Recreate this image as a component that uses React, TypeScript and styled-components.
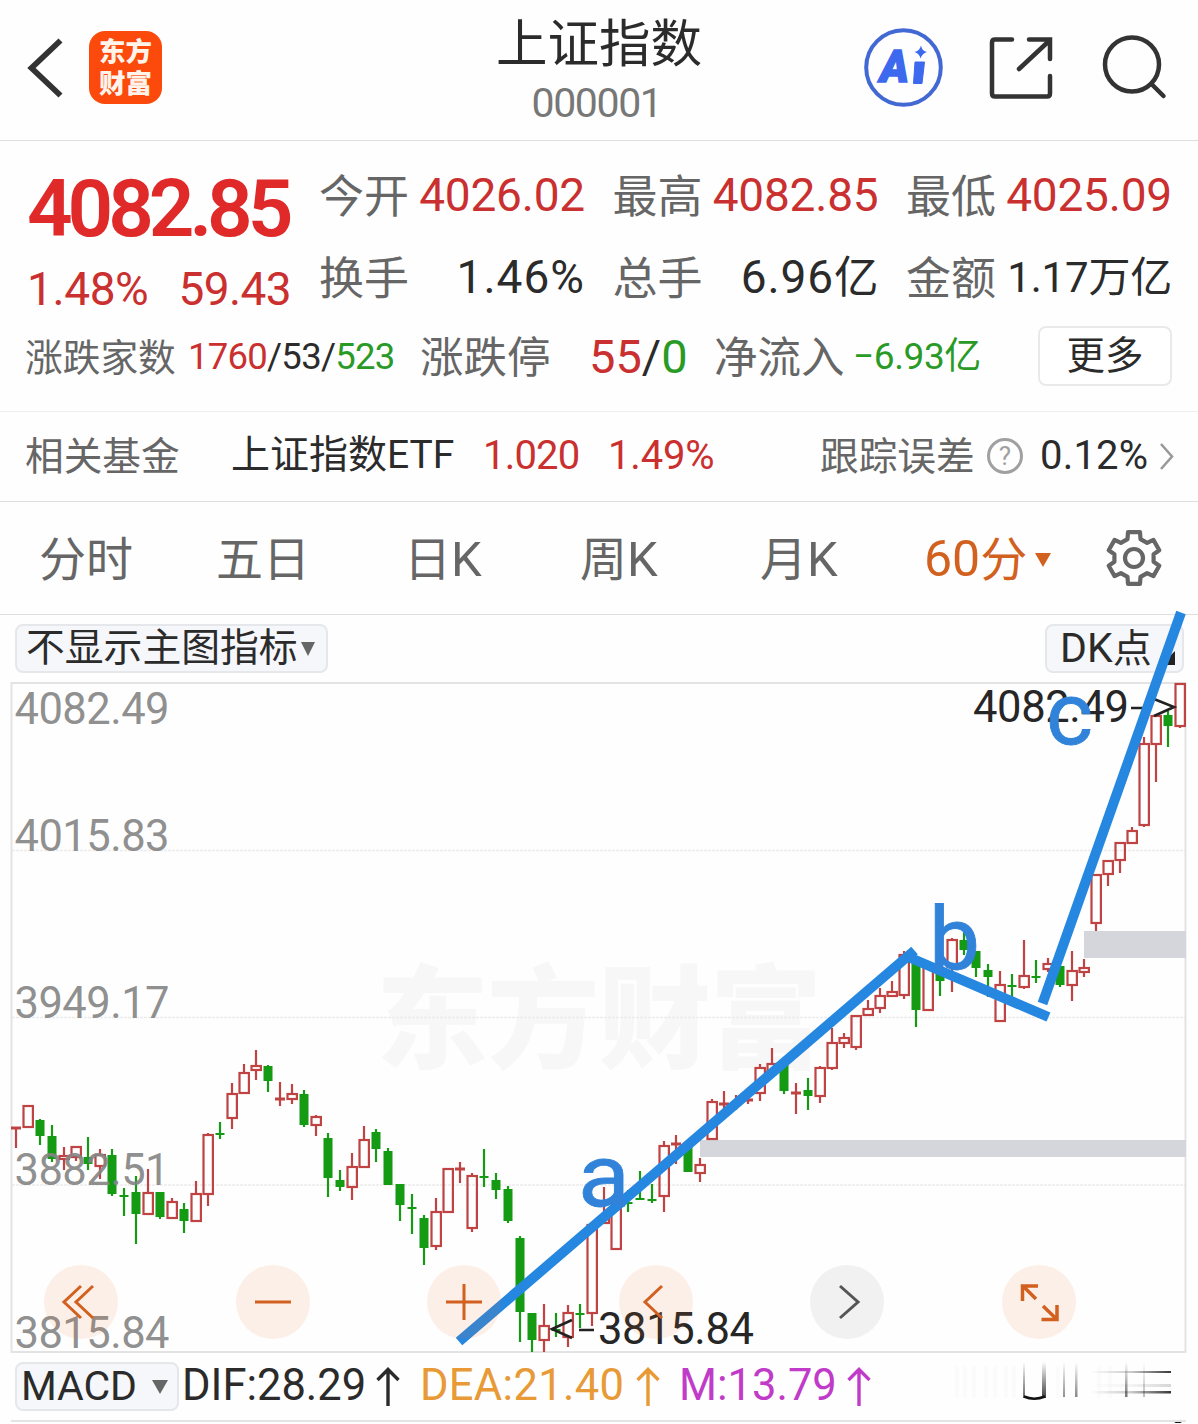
import React from 'react';
import styled, { createGlobalStyle } from 'styled-components';

const C = {
  red: '#c9302f',
  green: '#2a9a27',
  dark: '#2b2b2b',
  gray: '#666666',
  orange: '#d2601f',
  line: '#dedede',
  blue: '#2587df',
};

const GlobalStyle = createGlobalStyle`
  * { box-sizing: border-box; }
  body { margin: 0; background: #fefefe; }
  svg { display: block; flex: none; }
`;

const Screen = styled.div`
  width: 1198px;
  height: 1424px;
  overflow: hidden;
  background: #fefefe;
  color: ${C.dark};
  font-family: Roboto, 'Noto Sans CJK SC', sans-serif;
  display: flex;
  flex-direction: column;
`;

const Txt = styled.span<{ $s: number; $c?: string; $ls?: number; $w?: number }>`
  display: block;
  white-space: nowrap;
  font-size: ${p => p.$s}px;
  line-height: 1.2;
  color: ${p => p.$c ?? C.dark};
  letter-spacing: ${p => p.$ls ?? 0}px;
  font-weight: ${p => p.$w ?? 400};
`;

const Label = styled(Txt)`
  padding-top: 4px;
  margin-left: -1px;
`;

const Part = styled.span<{ $c?: string; $s?: number; $ls?: number }>`
  color: ${p => p.$c ?? 'inherit'};
  font-size: ${p => (p.$s ? `${p.$s}px` : 'inherit')};
  letter-spacing: ${p => (p.$ls !== undefined ? `${p.$ls}px` : 'inherit')};
`;

/* ---------- header ---------- */
const Header = styled.header`
  height: 141px;
  flex: none;
  border-bottom: 1px solid ${C.line};
  display: grid;
  grid-template-columns: 400px 1fr 400px;
`;

const HeaderLeft = styled.div`
  display: flex;
  align-items: flex-start;
  padding: 31px 0 0 26px;
  gap: 25px;
`;

const Logo = styled.div`
  width: 73px;
  height: 73px;
  border-radius: 16px;
  background: #fb4a0b;
  color: #fff3ea;
  font-weight: 900;
  font-size: 26.5px;
  line-height: 32px;
  padding-top: 5px;
  text-align: center;
`;

const TitleBox = styled.div`
  display: flex;
  flex-direction: column;
  align-items: center;
  padding-top: 14px;
`;

const Code = styled(Txt)`
  margin-top: 3px;
  padding-right: 5px;
`;

const HeaderRight = styled.div`
  display: flex;
  align-items: flex-start;
  padding: 28px 0 0 66px;
`;

/* ---------- quote ---------- */
const Quote = styled.section`
  height: 271px;
  flex: none;
  border-bottom: 1px solid #efefef;
`;

const QuoteTop = styled.div`
  height: 177px;
  display: grid;
  grid-template-columns: 264px 1fr;
  column-gap: 29px;
  padding: 0 27px;
`;

const PriceCol = styled.div`
  display: flex;
  flex-direction: column;
  padding-top: 20px;
`;

const ChangeRow = styled.div`
  display: flex;
  justify-content: space-between;
  margin-top: 5px;
`;

const Stats = styled.div`
  display: grid;
  grid-template-columns: repeat(3, 265px);
  column-gap: 28.5px;
  grid-auto-rows: 82px;
  padding-top: 14px;
`;

const Stat = styled.div`
  display: flex;
  justify-content: space-between;
  align-items: center;
`;

const Breadth = styled.div`
  display: grid;
  grid-template-columns: 162px 233px 168px 126px 138px 185px 134px;
  align-items: center;
  height: 78px;
  padding-left: 26px;
`;

const MoreButton = styled.button`
  height: 60px;
  margin: -2px 0 0;
  padding: 0;
  border: 2px solid #e9e9e9;
  border-radius: 8px;
  background: #fff;
  font-family: inherit;
  display: flex;
  justify-content: center;
  align-items: center;
`;

/* ---------- fund ---------- */
const FundRow = styled.section`
  height: 90px;
  flex: none;
  border-bottom: 1px solid ${C.line};
  display: grid;
  grid-template-columns: 205px 252px 125px 213px 166px 53px 120px 20px;
  align-items: center;
  padding-left: 26px;
  padding-bottom: 2px;
`;

const Help = styled.span`
  width: 36px;
  height: 36px;
  border: 3px solid #a0a0a0;
  border-radius: 50%;
  color: #a0a0a0;
  font-size: 26px;
  line-height: 31px;
  text-align: center;
`;

/* ---------- tabs ---------- */
const Tabs = styled.nav`
  height: 113px;
  flex: none;
  border-bottom: 1px solid ${C.line};
  display: grid;
  grid-template-columns: 177px 188px 176px 180px 164px 181px 60px;
  align-items: center;
  padding-left: 39px;
`;

const Tab = styled.div<{ $active?: boolean }>`
  display: flex;
  align-items: center;
  gap: 8px;
  padding-top: 3px;
  font-size: 47px;
  line-height: 56px;
  color: ${p => (p.$active ? C.orange : C.gray)};
`;

const Caret = styled.i<{ $w: number; $h: number; $c: string }>`
  width: 0;
  height: 0;
  border-left: ${p => p.$w / 2}px solid transparent;
  border-right: ${p => p.$w / 2}px solid transparent;
  border-top: ${p => p.$h}px solid ${p => p.$c};
`;

/* ---------- chart ---------- */
const ChartPanel = styled.section`
  position: relative;
  height: 739px;
  flex: none;
`;

const ChartBar = styled.div`
  height: 67px;
  display: flex;
  justify-content: space-between;
  align-items: center;
  padding: 0 14px 0 15px;
`;

const Pill = styled.button<{ $w: number; $gap: number; $pl: number }>`
  width: ${p => p.$w}px;
  height: 49px;
  flex: none;
  margin: 0;
  padding: 0 0 0 ${p => p.$pl}px;
  border: 2px solid #e5e7eb;
  border-radius: 8px;
  background: #f6f7fa;
  font-family: inherit;
  display: flex;
  align-items: center;
  gap: ${p => p.$gap}px;
`;

const Corner = styled.i`
  align-self: flex-end;
  margin-bottom: 6px;
  border-left: 14px solid transparent;
  border-bottom: 14px solid #222;
`;

const ChartSvg = styled.svg`
  position: relative;
  overflow: visible;
`;

const Controls = styled.div`
  position: absolute;
  left: 44px;
  top: 650px;
  width: 1032px;
  display: flex;
  justify-content: space-between;
`;

const Round = styled.button<{ $muted?: boolean }>`
  width: 74px;
  height: 74px;
  border: 0;
  padding: 0;
  border-radius: 50%;
  background: ${p => (p.$muted ? 'rgba(60,60,60,.065)' : 'rgba(240,110,40,.1)')};
  color: ${p => (p.$muted ? '#555' : C.orange)};
`;

/* ---------- indicator ---------- */
const Foot = styled.footer`
  position: relative;
  height: 70px;
  flex: none;
`;

const Indicator = styled.div`
  display: flex;
  align-items: flex-start;
  padding: 8px 0 0 15px;
`;

const Reading = styled.div<{ $c: string; $w: number; $ml: number }>`
  width: ${p => p.$w}px;
  height: 49px;
  flex: none;
  display: flex;
  align-items: center;
  justify-content: space-between;
  margin-left: ${p => p.$ml}px;
  color: ${p => p.$c};
`;

const SmearBox = styled.div`
  width: 260px;
  flex: none;
  margin-left: auto;
  margin-top: -1px;
`;

const IndicatorBase = styled.div`
  position: absolute;
  left: 11px;
  right: 12px;
  bottom: 2px;
  height: 2px;
  background: #e4e4e4;
`;

type Candle = [number, 'r' | 'g', number, number, number, number];

// x, direction, high, body top, body bottom, low
const candles: Candle[] = [
  [16, 'r', 1127, 1127, 1129, 1148], [28, 'r', 1106, 1106, 1127, 1127], [40, 'g', 1119, 1120, 1136, 1145],
  [52, 'g', 1125, 1136, 1159, 1162], [64, 'r', 1147, 1156, 1159, 1170], [76, 'r', 1147, 1147, 1157, 1161],
  [88, 'g', 1137, 1157, 1164, 1170], [100, 'r', 1149, 1155, 1166, 1179], [112, 'g', 1149, 1155, 1194, 1196],
  [124, 'g', 1188, 1195, 1197, 1216], [136, 'g', 1176, 1192, 1214, 1244], [148, 'r', 1169, 1193, 1214, 1215],
  [160, 'g', 1192, 1192, 1217, 1219], [172, 'r', 1198, 1202, 1218, 1218], [184, 'g', 1203, 1209, 1221, 1233],
  [196, 'r', 1181, 1194, 1221, 1222], [208, 'r', 1133, 1135, 1194, 1206], [220, 'g', 1122, 1133, 1135, 1139],
  [232, 'r', 1083, 1094, 1118, 1129], [244, 'r', 1064, 1073, 1093, 1093], [256, 'r', 1050, 1066, 1070, 1080],
  [268, 'g', 1065, 1066, 1081, 1092], [280, 'r', 1082, 1098, 1100, 1106], [292, 'r', 1084, 1094, 1099, 1104],
  [304, 'g', 1090, 1094, 1125, 1127], [316, 'r', 1115, 1117, 1125, 1136], [328, 'g', 1133, 1138, 1178, 1197],
  [340, 'g', 1170, 1180, 1187, 1191], [352, 'r', 1153, 1167, 1187, 1200], [364, 'r', 1126, 1140, 1167, 1167],
  [376, 'g', 1129, 1132, 1149, 1162], [388, 'g', 1148, 1151, 1185, 1185], [400, 'g', 1184, 1184, 1205, 1221],
  [412, 'g', 1194, 1207, 1209, 1234], [424, 'g', 1215, 1218, 1248, 1265], [436, 'r', 1198, 1212, 1246, 1250],
  [448, 'r', 1169, 1169, 1212, 1212], [460, 'r', 1162, 1168, 1170, 1183], [472, 'r', 1173, 1176, 1228, 1232],
  [484, 'g', 1149, 1176, 1178, 1187], [496, 'g', 1173, 1180, 1190, 1199], [508, 'g', 1186, 1189, 1221, 1223],
  [520, 'g', 1236, 1238, 1312, 1342], [532, 'g', 1313, 1313, 1340, 1352], [544, 'r', 1304, 1326, 1340, 1352],
  [556, 'g', 1313, 1329, 1331, 1337], [568, 'r', 1305, 1313, 1337, 1347], [580, 'g', 1304, 1313, 1315, 1328],
  [592, 'r', 1223, 1225, 1313, 1326], [604, 'r', 1187, 1217, 1223, 1223], [616, 'r', 1203, 1203, 1249, 1250],
  [628, 'g', 1190, 1202, 1204, 1212], [640, 'g', 1171, 1198, 1200, 1200], [652, 'g', 1184, 1199, 1201, 1203],
  [664, 'r', 1141, 1146, 1196, 1212], [676, 'r', 1135, 1143, 1145, 1164], [688, 'g', 1147, 1147, 1172, 1172],
  [700, 'r', 1158, 1165, 1173, 1182], [712, 'r', 1099, 1102, 1139, 1140], [724, 'r', 1091, 1103, 1104, 1113],
  [736, 'r', 1095, 1102, 1104, 1110], [748, 'r', 1095, 1099, 1101, 1104], [760, 'r', 1064, 1068, 1093, 1101],
  [772, 'r', 1048, 1064, 1072, 1072], [784, 'g', 1062, 1062, 1091, 1094], [796, 'r', 1083, 1092, 1092, 1114],
  [808, 'g', 1078, 1090, 1096, 1110], [820, 'r', 1066, 1068, 1096, 1103], [832, 'r', 1028, 1043, 1068, 1070],
  [844, 'r', 1033, 1038, 1043, 1048], [856, 'r', 1016, 1016, 1047, 1050], [868, 'r', 1000, 1009, 1015, 1015],
  [880, 'r', 988, 996, 1008, 1013], [892, 'r', 981, 992, 996, 996], [904, 'r', 951, 955, 995, 999],
  [916, 'g', 957, 957, 1010, 1027], [928, 'r', 965, 965, 1010, 1010], [940, 'g', 973, 973, 981, 996],
  [952, 'r', 938, 940, 967, 992], [964, 'g', 932, 940, 950, 955], [976, 'g', 951, 951, 968, 977],
  [988, 'g', 964, 970, 977, 997], [1000, 'r', 971, 985, 1021, 1021], [1012, 'g', 974, 985, 987, 997],
  [1024, 'r', 940, 976, 987, 989], [1036, 'g', 960, 976, 977, 983], [1048, 'r', 958, 964, 969, 972],
  [1060, 'g', 966, 966, 985, 987], [1072, 'r', 951, 971, 985, 1001], [1084, 'r', 959, 968, 972, 977],
  [1096, 'r', 875, 875, 923, 931], [1108, 'r', 861, 861, 874, 886], [1120, 'r', 843, 843, 860, 873],
  [1132, 'r', 827, 831, 843, 843], [1144, 'r', 737, 744, 825, 827], [1156, 'r', 716, 716, 744, 782],
  [1168, 'g', 711, 715, 726, 747], [1180, 'r', 684, 684, 726, 728],
];

const axis: [string, number][] = [
  ['4082.49', 724], ['4015.83', 851], ['3949.17', 1018], ['3882.51', 1185], ['3815.84', 1348],
];

function CandleMark({ c }: { c: Candle }) {
  const [x, kind, hi, top, bot, lo] = c;
  const col = kind === 'r' ? '#bf4343' : '#159a14';
  const flat = bot - top <= 2;
  return (
    <g stroke={col} strokeWidth={2.2} fill="none">
      {hi < top && <path d={`M${x} ${hi}V${top}`} />}
      {lo > bot && <path d={`M${x} ${bot}V${lo}`} />}
      {kind === 'g' || flat ? (
        <rect x={x - 4.5} y={top} width={9} height={Math.max(bot - top, 2)} fill={col} stroke={flat && kind === 'r' ? col : 'none'} strokeWidth={1} />
      ) : (
        <rect x={x - 4.5} y={top} width={9.4} height={bot - top} />
      )}
    </g>
  );
}

function Chart() {
  return (
    <ChartSvg width="1198" height="672" viewBox="0 682 1198 672" fontFamily="Roboto, 'Noto Sans CJK SC', sans-serif">
      <text x="376" y="1060" fontSize="112" fontWeight="900" fill="#f7f7f7" textLength="446">东方财富</text>
      <g stroke="#ececec" strokeWidth="1.5">
        <path d="M12 850.5H1185M12 1017.5H1185M12 1185H1185" strokeDasharray="3 1" />
      </g>
      <rect x="11.5" y="683" width="1174" height="669" fill="none" stroke="#e3e3e3" strokeWidth="2" />
      <rect x="1084" y="931" width="102" height="27" fill="#d5d6db" />
      <rect x="700" y="1140" width="486" height="17" fill="#d5d6db" />
      {candles.map(c => <CandleMark key={c[0]} c={c} />)}
      <g fontSize="43.5" fill="#858585" fillOpacity="0.93">
        {axis.map(([t, y]) => <text key={t} x="14.5" y={y} textLength="155">{t}</text>)}
      </g>
      <g fontSize="43.5" fill="#262626">
        <text x="973" y="722" textLength="156">4082.49</text>
        <text x="598" y="1344" textLength="156">3815.84</text>
      </g>
      <g stroke="#222" strokeWidth="2.6" fill="none">
        <path d="M1131 708H1143M1154 699L1174 707L1154 716" />
        <path d="M579 1330H594M572 1320L552 1329L572 1338" />
      </g>
      <g stroke={C.blue} strokeWidth="10" fill="none">
        <path d="M459 1341.5L914.5 950.5" />
        <path d="M906 956L1048.5 1017" />
        <path d="M1042.500 1003.500L1181 612.500" />
      </g>
      <g fill="#3183da" stroke="#3183da" strokeWidth="0.8" fontSize="87">
        <text x="578" y="1205.500" textLength="52" lengthAdjust="spacingAndGlyphs">a</text>
        <text x="929" y="969" textLength="51" lengthAdjust="spacingAndGlyphs">b</text>
        <text x="1046" y="744" textLength="47" lengthAdjust="spacingAndGlyphs">c</text>
      </g>
    </ChartSvg>
  );
}

const controlPaths = [
  'M37 21L20 37L37 53M49 21L32 37L49 53',
  'M19 37H55',
  'M19 37H55M37 19V55',
  'M43 21L26 37L43 53',
  'M30 21L48 37L30 53',
];

function Arrow() {
  return (
    <svg width="24" height="40" viewBox="0 0 24 40" fill="none" stroke="currentColor" strokeWidth="3.4">
      <path d="M12 39V3M1.500 13L12 2.500L22.500 13" />
    </svg>
  );
}

const gear = (() => {
  const pts: string[] = [];
  for (let i = 0; i < 6; i++) {
    const base = -90 + i * 60;
    const add = (a: number, r: number) => {
      const t = ((base + a) * Math.PI) / 180;
      pts.push(`${(29 + r * Math.cos(t)).toFixed(1)} ${(29 + r * Math.sin(t)).toFixed(1)}`);
    };
    add(-19, 20);
    add(-13, 26.5);
    add(13, 26.5);
    add(19, 20);
  }
  return `M${pts.join('L')}Z`;
})();

const faint = [955, 963, 972, 984, 993, 1004, 1012, 1056, 1097, 1108];

function Smear() {
  return (
    <svg width="260" height="62" viewBox="938 1361 260 62" fill="none">
      <defs>
        <linearGradient id="fv" x1="0" y1="1362" x2="0" y2="1398" gradientUnits="userSpaceOnUse">
          <stop offset="0" stopColor="#000" stopOpacity="0" />
          <stop offset="1" stopColor="#000" stopOpacity=".75" />
        </linearGradient>
        <linearGradient id="fh" x1="1090" y1="0" x2="1172" y2="0" gradientUnits="userSpaceOnUse">
          <stop offset="0" stopColor="#000" stopOpacity="0" />
          <stop offset=".5" stopColor="#000" stopOpacity=".2" />
          <stop offset="1" stopColor="#000" stopOpacity=".8" />
        </linearGradient>
      </defs>
      {faint.map(x => <rect key={x} x={x} y="1366" width="4" height="32" fill="#000" opacity=".012" />)}
      <g fill="url(#fv)">
        <rect x="1023" y="1362" width="2" height="36" opacity=".8" />
        <rect x="1042" y="1362" width="4" height="36" />
        <rect x="1063" y="1362" width="2" height="35" opacity=".6" />
        <rect x="1075" y="1362" width="2.500" height="35" opacity=".65" />
        <rect x="1125" y="1362" width="2.500" height="35" opacity=".75" />
        <rect x="1143" y="1362" width="2" height="35" opacity=".35" />
      </g>
      <path d="M1024 1396.500Q1034 1401 1045 1396.500" stroke="#111" strokeWidth="2.500" />
      <g fill="url(#fh)">
        <rect x="1090" y="1371" width="81" height="2" />
        <rect x="1090" y="1391" width="81" height="2.500" />
        <rect x="1090" y="1384" width="81" height="3" opacity=".2" />
      </g>
      <path d="M1175 1424L1181 1421" stroke="#111" strokeWidth="3" />
    </svg>
  );
}

export default function App() {
  return (
    <Screen>
      <GlobalStyle />
      <Header>
        <HeaderLeft>
          <svg width="38" height="73" viewBox="0 0 38 73" fill="none" stroke="#333" strokeWidth="5.800">
            <path d="M34.500 9.500L5.500 37L34.500 64.500" />
          </svg>
          <Logo>东方<br />财富</Logo>
        </HeaderLeft>
        <TitleBox>
          <Txt $s={51.5}>上证指数</Txt>
          <Code $s={41} $c="#777" $ls={-1.4}>000001</Code>
        </TitleBox>
        <HeaderRight>
          <svg width="320" height="80" viewBox="864 28 320 80" fill="none" stroke="#333" strokeWidth="4.500">
            <circle cx="903.500" cy="67.500" r="37.300" stroke="#4268d4" strokeWidth="4" />
            <text x="880" y="82" fontSize="45" fontWeight="900" fontStyle="italic" fill="#3d69ef" stroke="#3d69ef" strokeWidth="1.500" textLength="29" lengthAdjust="spacingAndGlyphs" fontFamily="Roboto, sans-serif">A</text>
            <path d="M915 62H924.500L922 83.500H913.500Z" fill="#3d69ef" stroke="#3d69ef" strokeWidth="1" />
            <path d="M921 45.500Q922 51 927 52Q922 53.500 920.500 58.500Q919.500 53.500 914.500 52Q919.500 51 921 45.500Z" fill="#3d69ef" stroke="none" />
            <path d="M1012 39.500H995Q992 39.500 992 42.500V93.500Q992 96.500 995 96.500H1047Q1050 96.500 1050 93.500V76M1029 39.500H1050V59M1049 41L1019 69" strokeLinecap="round" />
            <circle cx="1132" cy="64.500" r="27" />
            <path d="M1152 84.500L1163.500 96" strokeLinecap="round" />
          </svg>
        </HeaderRight>
      </Header>

      <Quote>
        <QuoteTop>
          <PriceCol>
            <Txt $s={80} $c="#e02a2a" $ls={-5.1} $w={600}>4082.85</Txt>
            <ChangeRow>
              <Txt $s={46} $c={C.red} $ls={-0.4}>1.48%</Txt>
              <Txt $s={46} $c={C.red} $ls={-0.6}>59.43</Txt>
            </ChangeRow>
          </PriceCol>
          <Stats>
            <Stat><Label $s={45} $c={C.gray}>今开</Label><Txt $s={46} $c={C.red} $ls={-0.2}>4026.02</Txt></Stat>
            <Stat><Label $s={45} $c={C.gray}>最高</Label><Txt $s={46} $c={C.red} $ls={-0.2}>4082.85</Txt></Stat>
            <Stat><Label $s={45} $c={C.gray}>最低</Label><Txt $s={46} $c={C.red} $ls={-0.2}>4025.09</Txt></Stat>
            <Stat><Label $s={45} $c={C.gray}>换手</Label><Txt $s={46} $ls={1}>1.46%</Txt></Stat>
            <Stat><Label $s={45} $c={C.gray}>总手</Label><Txt $s={46} $ls={0.9}>6.96<Part $s={44.5} $ls={0}>亿</Part></Txt></Stat>
            <Stat><Label $s={45} $c={C.gray}>金额</Label><Txt $s={42} $ls={-0.2}>1.17万亿</Txt></Stat>
          </Stats>
        </QuoteTop>
        <Breadth>
          <Label $s={37.7} $c={C.gray}>涨跌家数</Label>
          <Txt $s={36.5} $ls={-0.75}><Part $c={C.red}>1760</Part>/53/<Part $c={C.green}>523</Part></Txt>
          <Label $s={43.5} $c={C.gray}>涨跌停</Label>
          <Txt $s={47}><Part $c={C.red}>55</Part>/<Part $c={C.green}>0</Part></Txt>
          <Label $s={43.5} $c={C.gray}>净流入</Label>
          <Txt $s={37} $c={C.green} $ls={-0.4}>−6.93亿</Txt>
          <MoreButton><Txt $s={38.5}>更多</Txt></MoreButton>
        </Breadth>
      </Quote>

      <FundRow>
        <Label $s={38.7} $c={C.gray}>相关基金</Label>
        <Txt $s={39}>上证指数ETF</Txt>
        <Txt $s={40} $c={C.red} $ls={-0.8}>1.020</Txt>
        <Txt $s={40} $c={C.red} $ls={-0.2}>1.49%</Txt>
        <Label $s={38.7} $c={C.gray}>跟踪误差</Label>
        <Help>?</Help>
        <Txt $s={40} $ls={0.2}>0.12%</Txt>
        <svg width="16" height="30" viewBox="0 0 16 30" fill="none" stroke="#999" strokeWidth="2.600"><path d="M1 3L12 15.500L1 28" /></svg>
      </FundRow>

      <Tabs>
        <Tab>分时</Tab>
        <Tab>五日</Tab>
        <Tab><span>日<Part $s={49}>K</Part></span></Tab>
        <Tab><span>周<Part $s={49}>K</Part></span></Tab>
        <Tab><span>月<Part $s={49}>K</Part></span></Tab>
        <Tab $active><span><Part $s={50}>60</Part>分</span><Caret $w={16} $h={14} $c={C.orange} /></Tab>
        <svg width="58" height="58" viewBox="0 0 58 58" fill="none" stroke="#666" strokeWidth="4.200" strokeLinejoin="round">
          <path d={gear} /><circle cx="29" cy="29" r="9" />
        </svg>
      </Tabs>

      <ChartPanel>
        <ChartBar>
          <Pill $w={313} $gap={3} $pl={9}><Txt $s={38.8}>不显示主图指标</Txt><Caret $w={15} $h={14} $c="#666" /></Pill>
          <Pill $w={139} $gap={9} $pl={13}><Txt $s={39}><Part $s={41}>DK</Part>点</Txt><Corner /></Pill>
        </ChartBar>
        <Chart />
        <Controls>
          {controlPaths.map((d, i) => (
            <Round key={d} $muted={i === 4}>
              <svg width="74" height="74" viewBox="0 0 74 74" fill="none" stroke="currentColor" strokeWidth="3"><path d={d} /></svg>
            </Round>
          ))}
          <Round>
            <svg width="74" height="74" viewBox="0 0 74 74" fill="none" stroke="currentColor" strokeWidth="3.500">
              <path d="M20.500 36V21H36M21 21L34 34M55 40V54.500H39.500M54.500 54L41 41" />
            </svg>
          </Round>
        </Controls>
      </ChartPanel>

      <Foot>
        <Indicator>
          <Pill $w={164} $gap={15} $pl={4}><Txt $s={41} $ls={-0.1}>MACD</Txt><Caret $w={16} $h={14} $c="#666" /></Pill>
          <Reading $c={C.dark} $w={218} $ml={3}><Txt $s={43.5}>DIF:28.29</Txt><Arrow /></Reading>
          <Reading $c="#e79a35" $w={240} $ml={20}><Txt $s={43.5} $c="#e79a35" $ls={0.3}>DEA:21.40</Txt><Arrow /></Reading>
          <Reading $c="#c03cc8" $w={192} $ml={19}><Txt $s={43.5} $c="#c03cc8">M:13.79</Txt><Arrow /></Reading>
          <SmearBox><Smear /></SmearBox>
        </Indicator>
        <IndicatorBase />
      </Foot>
    </Screen>
  );
}
